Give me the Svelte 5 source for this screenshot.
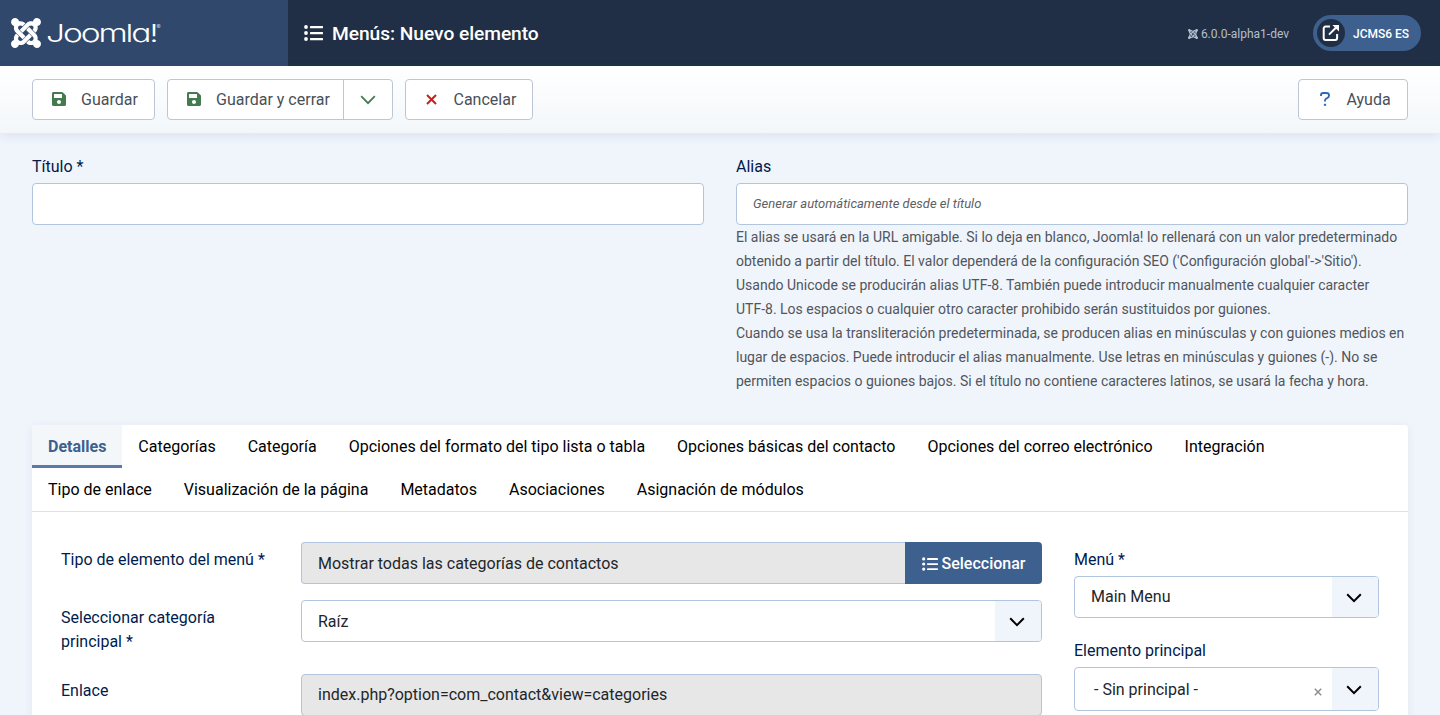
<script>
  const firstTabs = ['Detalles', 'Categorías', 'Categoría', 'Opciones del formato del tipo lista o tabla', 'Opciones básicas del contacto', 'Opciones del correo electrónico', 'Integración'];
  const secondTabs = ['Tipo de enlace', 'Visualización de la página', 'Metadatos', 'Asociaciones', 'Asignación de módulos'];
  const rows = [firstTabs, secondTabs];
  const help = [
    'El alias se usará en la URL amigable. Si lo deja en blanco, Joomla! lo rellenará con un valor predeterminado',
    "obtenido a partir del título. El valor dependerá de la configuración SEO ('Configuración global'->'Sitio').",
    'Usando Unicode se producirán alias UTF-8. También puede introducir manualmente cualquier caracter',
    'UTF-8. Los espacios o cualquier otro caracter prohibido serán sustituidos por guiones.',
    'Cuando se usa la transliteración predeterminada, se producen alias en minúsculas y con guiones medios en',
    'lugar de espacios. Puede introducir el alias manualmente. Use letras en minúsculas y guiones (-). No se',
    'permiten espacios o guiones bajos. Si el título no contiene caracteres latinos, se usará la fecha y hora.'
  ];
  let active = $state('Detalles');
</script>

{#snippet joomla(cls)}
  <svg class={cls} viewBox="0 32 448 448" fill="currentColor" preserveAspectRatio="none"><path d="M.6 92.1C.6 58.8 27.4 32 60.4 32c30 0 54.5 21.9 59.2 50.2 32.6-7.6 67.1.6 96.5 30l-44.3 44.3c-20.5-20.5-42.6-16.3-55.4-3.5-14.3 14.3-14.3 37.9 0 52.2l99.5 99.5-44 44.3c-87.7-87.2-49.7-49.7-99.8-99.7-26.8-26.5-35-64.8-24.8-98.9C20.4 144.6.6 120.7.6 92.1zm129.5 116.4l44.3 44.3c10-10 89.7-89.7 99.7-99.8 14.3-14.3 37.6-14.3 51.9 0 12.8 12.8 17 35-3.5 55.4l44 44.3c31.2-31.2 38.5-67.6 28.9-101.2 29.2-4.1 51.9-29.2 51.9-59.5 0-33.2-26.8-60.1-59.8-60.1-30.3 0-55.4 22.5-59.5 51.6-33.8-9.9-71.7-1.5-98.3 25.1-18.3 19.1-71.1 71.5-99.6 99.9zm266.3 152.2c8.2-32.7-.9-68.5-26.3-93.9-11.8-12.2 5 4.7-99.5-99.7l-44.3 44.3 99.7 99.7c14.3 14.3 14.3 37.6 0 51.9-12.8 12.8-35 17-55.4-3.5l-44 44.3c27.6 30.2 68 38.8 102.7 28 5.5 27.4 29.7 48.1 58.9 48.1 33 0 59.8-26.8 59.8-60.1 0-30.2-22.5-55-51.6-59.1zm-84.3-53.1l-44-44.3c-87 86.4-50.4 50.4-99.7 99.8-14.3 14.3-37.6 14.3-51.9 0-13.1-13.4-16.9-35.3 3.2-55.4l-44-44.3c-30.2 30.2-38 65.2-29.5 98.3-26.7 6-46.2 29.9-46.2 58.2C0 453.2 26.8 480 59.8 480c28.6 0 52.5-19.8 58.6-46.7 32.7 8.2 68.5-.6 94.2-26 32.1-32 12.2-12.4 99.5-99.7z" /></svg>
{/snippet}

{#snippet list(cls)}
  <svg class={cls} viewBox="0 0 19 16" fill="currentColor"><circle cx="2" cy="2" r="1.9" /><circle cx="2" cy="8" r="1.9" /><circle cx="2" cy="14" r="1.9" /><rect x="6" y="1" width="13" height="2.2" rx=".5" /><rect x="6" y="7" width="13" height="2.2" rx=".5" /><rect x="6" y="13" width="13" height="2.2" rx=".5" /></svg>
{/snippet}

{#snippet save()}
  <svg class="save" viewBox="0 32 448 448" fill="currentColor"><path d="M433.941 129.941l-83.882-83.882A48 48 0 0 0 316.118 32H48C21.49 32 0 53.49 0 80v352c0 26.51 21.49 48 48 48h352c26.51 0 48-21.49 48-48V163.882a48 48 0 0 0-14.059-33.941zM224 416c-35.346 0-64-28.654-64-64 0-35.346 28.654-64 64-64s64 28.654 64 64c0 35.346-28.654 64-64 64zm96-304.52V212c0 6.627-5.373 12-12 12H76c-6.627 0-12-5.373-12-12V108c0-6.627 5.373-12 12-12h228.52c3.183 0 6.235 1.264 8.485 3.515l3.48 3.48A11.996 11.996 0 0 1 320 111.48z" /></svg>
{/snippet}

{#snippet chevron(w)}
  <svg width="16" height="10" viewBox="0 0 16 10" fill="none" stroke="currentColor" stroke-width={w}><path d="M1.2 1.200 8 8.100l6.800-6.900" /></svg>
{/snippet}

<header>
  <div class="brand">
    {@render joomla('mark')}
    <svg class="word" width="120" height="30" viewBox="0 0 120 30" fill="currentColor">
      <text transform="translate(-1 25) scale(1.370 1)" x="0" y="0" font-size="24.500" letter-spacing="-1.550">Joomla!</text>
      <text x="109.500" y="12" font-size="6">®</text>
    </svg>
  </div>
  <h1>{@render list('list-lg')}<span>Menús: Nuevo elemento</span></h1>
  <div class="version">{@render joomla('mini')}6.0.0-alpha1-dev</div>
  <div class="site">
    <span class="disc"><svg width="18" height="18" viewBox="0 0 18 18" fill="none" stroke="currentColor" stroke-width="2"><path d="M8 2.600H3.600A1.900 1.900 0 0 0 1.700 4.500v9.600A1.900 1.900 0 0 0 3.600 16h9.600a1.900 1.900 0 0 0 1.900-1.900V10M7 10.600l7.600-7.600" /><path d="M10.400 1H17v6.600z" fill="currentColor" stroke="none" /></svg></span>
    <b>JCMS6 ES</b>
  </div>
</header>

<div class="toolbar">
  <button class="btn guardar">{@render save()}Guardar</button>
  <div class="split">
    <button class="cerrar">{@render save()}Guardar y cerrar</button>
    <button class="drop">{@render chevron(1.8)}</button>
  </div>
  <button class="btn cancelar"><svg width="11" height="11" viewBox="0 0 11 11" fill="none" stroke="#c9201f" stroke-width="2"><path d="M1 1l9 9M10 1l-9 9" /></svg>Cancelar</button>
  <button class="btn ayuda"><svg width="10" height="14" viewBox="0 0 10 14" fill="none" stroke="#2a69b8" stroke-width="1.900"><path d="M1 4V3.300Q1 1 3.300 1h3.100Q9 1 9 3.400 9 5.100 7.400 6L6 6.800Q5 7.400 5 8.700V9.600" /><path d="M5 11.800v2" stroke-width="2.200" /></svg>Ayuda</button>
</div>

<main>
  <div class="heads">
    <div><label for="title">Título *</label><input id="title" /></div>
    <div>
      <label for="alias">Alias</label><input id="alias" class="auto" placeholder="Generar automáticamente desde el título" />
      <p>{#each help as line}<span>{line}</span>{/each}</p>
    </div>
  </div>

  <section class="card">
    <div class="tabs">
      {#each rows as row}
        <div class="tabrow">
          {#each row as tab}
            <button class:active={active === tab} onclick={() => (active = tab)}>{tab}</button>
          {/each}
        </div>
      {/each}
    </div>
    <div class="panel">
      <div class="fields">
        <div class="row">
          <div class="lab">Tipo de elemento del menú *</div>
          <div class="group"><div class="ctl gray">Mostrar todas las categorías de contactos</div><button class="select-btn">{@render list('list-sm')}Seleccionar</button></div>
        </div>
        <div class="row">
          <div class="lab">Seleccionar categoría principal *</div>
          <div class="ctl sel"><span>Raíz</span><i>{@render chevron(2)}</i></div>
        </div>
        <div class="row">
          <div class="lab">Enlace</div>
          <div class="ctl gray">index.php?option=com_contact&amp;view=categories</div>
        </div>
      </div>
      <aside>
        <div class="lab">Menú *</div>
        <div class="ctl sel"><span>Main Menu</span><i>{@render chevron(2)}</i></div>
        <div class="lab second">Elemento principal</div>
        <div class="ctl sel tall"><span>- Sin principal -</span><svg class="clear" width="8" height="8" viewBox="0 0 8 8" stroke="#8b8f94" stroke-width="1.500"><path d="M.8.8l6.400 6.400M7.200.8L.8 7.200" /></svg><i>{@render chevron(2)}</i></div>
      </aside>
    </div>
  </section>
</main>

<style>
  :global(body) { background: #f0f4fb; overflow: hidden; }
  :global(#app) { height: 715px; overflow: hidden; font: 16px/24px Roboto, sans-serif; color: #22262a; }
  :global(#app *) { box-sizing: border-box; }
  svg { display: block; flex: none; }
  button { font: inherit; border: 0; background: none; padding: 0; margin: 0; }
  header { height: 66px; display: flex; align-items: center; background: #202f45; color: #fff; padding-right: 19px; }
  .brand { width: 288px; height: 66px; background: #2f486b; display: flex; align-items: center; padding-left: 11px; }
  .brand :global(.mark) { width: 30px; height: 30px; }
  .word { margin: 0 0 3px 6px; font-family: Inter, sans-serif; font-weight: 300; font-feature-settings: 'cv11'; }
  h1 { margin: 0 auto 0 16px; font-size: 19.2px; line-height: 24px; font-weight: 500; letter-spacing: -.05px; display: flex; align-items: center; gap: 9px; }
  h1 span { padding-top: 2px; }
  :global(.list-lg) { width: 19px; height: 16px; }
  :global(.list-sm) { width: 16px; height: 14px; }
  .version { display: flex; align-items: center; gap: 3px; font-size: 12px; color: #b4bfcd; margin-right: 24px; padding-top: 2px; }
  :global(.mini) { width: 10px; height: 10px; }
  .site { width: 108px; height: 36px; border-radius: 18px; background: #3d608f; display: flex; align-items: center; gap: 8px; padding-left: 4px; font-size: 12px; white-space: nowrap; }
  .site b { font-weight: 500; padding-top: 2px; }
  .disc { width: 28px; height: 28px; border-radius: 50%; background: #202f45; display: flex; align-items: center; justify-content: center; flex: none; }
  .toolbar { position: relative; height: 67px; padding: 0 32px; display: flex; align-items: center; gap: 12px; background: linear-gradient(#fff, #f3f7fa); box-shadow: 0 3px 10px rgba(45, 85, 145, .1); color: #495057; }
  .toolbar button { color: #495057; display: flex; align-items: center; white-space: nowrap; }
  .toolbar button :global(.save) { width: 14px; height: 14px; color: #437b4e; margin: 0 15px 1px 0; }
  .btn, .split { height: 41px; border: 1px solid #bdc6d4; border-radius: 4px; background: #fff; }
  .guardar { width: 123px; padding-left: 19px; }
  .split { width: 226px; display: flex; }
  .cerrar { width: 175px; padding-left: 19px; }
  .toolbar .drop { flex: 1; border-left: 1px solid #bdc6d4; justify-content: center; color: #437b4e; padding-right: 1px; }
  .cancelar { width: 128px; padding-left: 20px; gap: 16.5px; }
  .ayuda { width: 110px; padding-left: 21px; gap: 16.5px; margin-left: auto; }
  .cancelar svg, .ayuda svg { margin-bottom: 1px; }
  main { padding: 22px 32px 0; }
  .heads { display: grid; grid-template-columns: 1fr 1fr; gap: 32px; height: 270px; }
  label, .lab { color: #001b4c; }
  label { display: block; height: 28px; }
  input { display: block; width: 100%; height: 42px; border: 1px solid #b2c5df; border-radius: 4px; background: #fff; padding: 0 16px; font: 16px Roboto, sans-serif; }
  .auto { font-size: 13px; padding-bottom: 1px; }
  input::placeholder { font-style: italic; color: #5d6166; opacity: 1; }
  p { margin: 0; font-size: 14px; color: #51565b; }
  p span { display: block; white-space: nowrap; }
  .card { background: #fff; border-radius: 4px; min-height: 400px; box-shadow: 0 2px 10px rgba(45, 85, 145, .07); }
  .tabs { border-bottom: 1px solid #d9e2ed; border-radius: 4px 4px 0 0; overflow: hidden; height: 87px; }
  .tabrow { display: flex; height: 43px; }
  .tabrow button { padding: 0 16px; height: 43px; color: #000; white-space: nowrap; }
  .tabrow .active { background: #f3f7fa; color: #3d608f; font-weight: 700; box-shadow: inset 0 -3px #5c7aa5; }
  .panel { display: flex; gap: 32px; padding: 30px 29px; }
  .fields { width: 981px; display: flex; flex-direction: column; }
  .row { display: grid; grid-template-columns: 192px 741px; column-gap: 48px; align-items: start; height: 58px; }
  .row:nth-child(2) { height: 74px; }
  .row .lab { padding-top: 6px; margin-right: -16px; }
  .row:nth-child(2) .lab { margin-right: 0; }
  .row:nth-child(3) .lab { padding-top: 5px; }
  .ctl { height: 42px; border: 1px solid #b2c5df; border-radius: 4px; background: #fff; padding-left: 16px; display: flex; align-items: center; flex: 1; }
  .gray { background: #e7e7e7; }
  .group { display: flex; }
  .group .ctl { border-radius: 4px 0 0 4px; border-right: 0; padding-top: 2px; }
  .select-btn { width: 137px; background: #3d608f; color: #fff; border-radius: 0 4px 4px 0; display: flex; align-items: center; justify-content: center; gap: 4px; padding: 2px 0 0 0; font-weight: 500; }
  .select-btn :global(svg) { margin-bottom: 1px; }
  .sel span { flex: 1; }
  .row .sel span, .tall span { padding-top: 2px; }
  .sel i { width: 46px; height: 100%; border-radius: 0 3px 3px 0; background: #f0f4fb; color: #000; display: flex; align-items: center; justify-content: center; padding: 2px 2px 0 0; }
  aside { width: 305px; flex: none; padding-top: 6px; }
  aside .lab { height: 28px; }
  aside .second { margin-top: 21px; }
  .tall { height: 44px; padding-left: 19px; }
  .clear { margin: 5px 10px 0 0; }
</style>
